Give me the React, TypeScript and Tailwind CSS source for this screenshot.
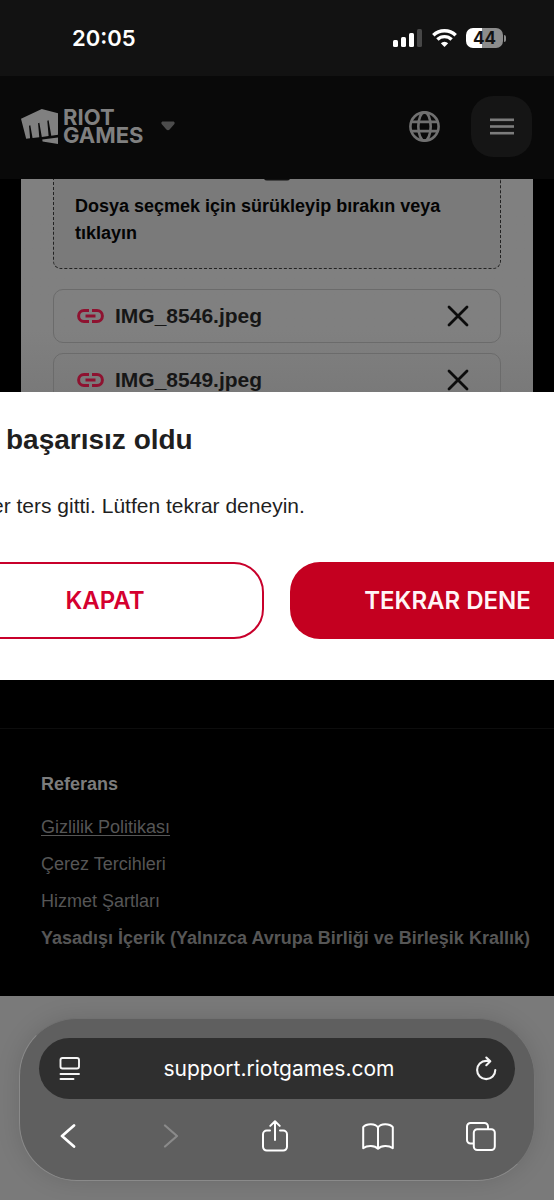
import type { ReactNode } from "react";

const files = ["IMG_8546.jpeg", "IMG_8549.jpeg"];

function StatusBar() {
  return (
    <div className="flex h-[76px] items-center justify-between bg-[#121212] pl-[72px] pr-12 font-['Inter',sans-serif]">
      <span className="text-[22px] font-semibold leading-7 text-white">20:05</span>
      <div className="flex items-center gap-[9px]">
        <svg width="30" height="18" viewBox="0 0 30 18" fill="#fff" aria-hidden="true">
          <rect x="0" y="11" width="5" height="7" rx="1.5" />
          <rect x="8" y="8" width="5" height="10" rx="1.5" />
          <rect x="16" y="4" width="5" height="14" rx="1.5" />
          <rect x="24" y="0" width="5" height="18" rx="1.5" fill="#474747" />
        </svg>
        <svg width="25" height="18" viewBox="0 0 25 18" fill="none" stroke="#fff" strokeWidth="3.4" aria-hidden="true">
          <path d="M1.3 6.3a16 16 0 0 1 22.4 0" />
          <path d="M5.4 10.5a10.2 10.2 0 0 1 14.2 0" />
          <path d="M12.5 18l-3.7-3.7a5.3 5.3 0 0 1 7.4 0z" fill="#fff" stroke="none" />
        </svg>
        <div className="flex items-center gap-px">
          <div className="flex h-5 w-[37px] items-center justify-center rounded-[7px] bg-[linear-gradient(90deg,#fff_44%,#8c8c8c_44%)] text-[17px] font-bold leading-5 text-[#121212]">
            44
          </div>
          <div className="h-[7px] w-[2px] rounded-r-full bg-[#8c8c8c]" />
        </div>
      </div>
    </div>
  );
}

function SiteHeader() {
  return (
    <header className="flex h-[103px] items-center justify-between bg-[#090909] pb-[3px] pl-[21px] pr-[22px]">
      <button type="button" className="flex items-center text-[#808080]" aria-label="Riot Games">
        <svg width="37" height="35" viewBox="0 0.86 24 22.28" preserveAspectRatio="none" fill="currentColor" aria-hidden="true">
          <path d="M13.458.86 0 7.093l3.353 12.761 2.552-.313-.701-8.024.838-.373 1.447 8.202 4.361-.535-.775-8.857.83-.37 1.591 9.025 4.412-.542-.849-9.708.84-.374 1.74 9.87L24 17.318V3.5zm.316 19.356.222 1.256L24 23.14v-4.18z" />
        </svg>
        <span className="ml-[5px] flex flex-col text-left font-['Inter',sans-serif] text-[22px] font-bold leading-[18px]">
          <span>RIOT</span>
          <span>GAMES</span>
        </span>
        <svg className="ml-[17px]" width="14" height="10" viewBox="0 0 14 10" fill="#4c4c4c" aria-hidden="true">
          <path d="M2 .5h10c1.6 0 2.2 1.6 1.2 2.7L8.6 8.500c-.9 1-2.300 1-3.200 0L.8 3.200C-.2 2.100.4.5 2 .5z" />
        </svg>
      </button>
      <div className="flex items-center gap-[31px]">
        <button type="button" aria-label="Dil">
          <svg width="31" height="31" viewBox="0 0 31 31" fill="none" stroke="#707070" strokeWidth="2.600" aria-hidden="true">
            <circle cx="15.5" cy="15.5" r="14.100" />
            <ellipse cx="15.5" cy="15.5" rx="6.200" ry="14.100" />
            <path d="M2.500 10.900h26M2.500 20.100h26" />
          </svg>
        </button>
        <button type="button" aria-label="Menü" className="flex size-[61px] items-center justify-center rounded-[22px] bg-[#151515]">
          <svg width="24" height="17" viewBox="0 0 24 17" fill="#7c7c7c" aria-hidden="true">
            <rect y="0.500" width="24" height="2.600" />
            <rect y="7.200" width="24" height="2.600" />
            <rect y="13.900" width="24" height="2.600" />
          </svg>
        </button>
      </div>
    </header>
  );
}

function FileRow({ name }: { name: string }) {
  return (
    <li className="flex h-[54px] items-center rounded-[10px] border border-[#6b6b6b] pl-[23px] pr-[31px]">
      <svg width="27" height="14" viewBox="0 0 27 14" fill="none" stroke="#8e1230" strokeWidth="3" aria-hidden="true">
        <path d="M12 1.600H7a5.400 5.400 0 0 0 0 10.800h5M15 1.600h5a5.400 5.400 0 0 1 0 10.800h-5M8.500 7h10" />
      </svg>
      <span className="ml-[11px] flex-1 text-[21px] font-bold leading-7 text-[#161616]">{name}</span>
      <button type="button" aria-label={`${name} kaldır`}>
        <svg width="22" height="22" viewBox="0 0 22 22" fill="none" stroke="#0c0c0c" strokeWidth="2.800" strokeLinecap="round" aria-hidden="true">
          <path d="M2 2l18 18M20 2 2 20" />
        </svg>
      </button>
    </li>
  );
}

function UploadCard() {
  return (
    <section className="mx-[21px] bg-gradient-to-b from-[#808080] from-60% to-[#757575] px-8 pb-6">
      <div className="flex flex-col rounded-b-[8px] border border-t-0 border-dashed border-[#222] bg-[#7a7a7a] px-[21px] pb-[21px]">
        <svg className="self-center" width="26" height="2" viewBox="0 0 26 2" aria-hidden="true">
          <path d="M0 0h26q-1 1.500-3 1.500H3Q1 1.500 0 0z" fill="#111" />
        </svg>
        <p className="mt-3 text-lg font-bold leading-[27px] text-[#040404]">
          Dosya seçmek için sürükleyip bırakın veya tıklayın
        </p>
      </div>
      <ul className="mt-5 flex flex-col gap-[10px]">
        {files.map((name) => (
          <FileRow key={name} name={name} />
        ))}
      </ul>
    </section>
  );
}

function ErrorDialog() {
  return (
    <div
      role="dialog"
      aria-labelledby="dialog-title"
      className="absolute bottom-12 -left-2 -right-[51px] bg-white pb-[41px] pt-8 text-[#1f1f1f]"
    >
      <h2 id="dialog-title" className="pl-[14px] text-[28px] font-bold leading-8">
        başarısız oldu
      </h2>
      <p className="mt-9 text-[21px] leading-7">er ters gitti. Lütfen tekrar deneyin.</p>
      <div className="mt-[42px] -ml-[46px] grid grid-cols-[318px_1fr] gap-[26px] font-['Inter',sans-serif] text-2xl font-semibold leading-7">
        <button type="button" className="h-[77px] rounded-[30px] border-2 border-[#c8002b] bg-white text-[#d5002f]">
          KAPAT
        </button>
        <button type="button" className="h-[77px] rounded-[30px] bg-[#c40020] text-[#fff5f6]">
          TEKRAR DENE
        </button>
      </div>
    </div>
  );
}

function Footer() {
  return (
    <footer className="border-t border-[#0d0d0d] bg-black pb-[45px] pl-[41px] pt-[42px] text-lg leading-[26px] text-[#565656]">
      <h3 className="font-bold text-[#7c7c7c]">Referans</h3>
      <ul className="mt-[17px] flex flex-col gap-[11px]">
        <li><a href="#gizlilik" className="underline underline-offset-2">Gizlilik Politikası</a></li>
        <li><a href="#cerez">Çerez Tercihleri</a></li>
        <li><a href="#sartlar">Hizmet Şartları</a></li>
        <li className="whitespace-nowrap font-bold"><a href="#icerik">Yasadışı İçerik (Yalnızca Avrupa Birliği ve Birleşik Krallık)</a></li>
      </ul>
    </footer>
  );
}

function ToolButton({ label, children }: { label: string; children: ReactNode }) {
  return (
    <button type="button" aria-label={label} className="flex h-9 w-8 items-center justify-center">
      {children}
    </button>
  );
}

function BrowserBar() {
  return (
    <div className="bg-[#7a7a7a] px-[19px] pb-[19px] pt-[22px]">
      <div className="rounded-[58px] border border-[#8a8a8a] border-r-[#757575] border-t-[#707070] bg-[#5f5f5f] px-[19px] pb-[26px] pt-[19px] shadow-[0_0_24px_rgba(0,0,0,0.12)]">
        <div className="flex h-[61px] items-center justify-between rounded-full bg-[#2f2f2f] px-[18px] text-white">
          <button type="button" aria-label="Sayfa menüsü">
            <svg width="26" height="26" viewBox="0 0 26 26" fill="none" stroke="#f4f4f4" strokeWidth="1.900" strokeLinecap="round" aria-hidden="true">
              <rect x="3.500" y="2" width="18.500" height="10.500" rx="2" />
              <path d="M3.500 18h18.500M3.500 23h13" />
            </svg>
          </button>
          <span className="font-['Inter',sans-serif] text-[21px] leading-7">support.riotgames.com</span>
          <button type="button" aria-label="Yenile">
            <svg width="22" height="26" viewBox="0 0 22 26" fill="none" stroke="#f4f4f4" strokeWidth="2.100" strokeLinecap="round" strokeLinejoin="round" aria-hidden="true">
              <path d="M20.300 14a9.100 9.100 0 1 1-9.100-9.100h3.500M11.300 1.500l4 3.800-4 3.900" />
            </svg>
          </button>
        </div>
        <div className="mt-[19px] flex items-center justify-between pl-[13px] pr-[18px]">
          <ToolButton label="Geri">
            <svg width="16" height="24" viewBox="0 0 16 24" fill="none" stroke="#fff" strokeWidth="2.700" strokeLinecap="round" strokeLinejoin="round" aria-hidden="true">
              <path d="M14 1.500 2 12l12 10.500" />
            </svg>
          </ToolButton>
          <ToolButton label="İleri">
            <svg width="16" height="24" viewBox="0 0 16 24" fill="none" stroke="#8a8a8a" strokeWidth="2.200" strokeLinecap="round" strokeLinejoin="round" aria-hidden="true">
              <path d="m2 1.500 12 10.500-12 10.500" />
            </svg>
          </ToolButton>
          <ToolButton label="Paylaş">
            <svg width="26" height="32" viewBox="0 0 26 32" fill="none" stroke="#fff" strokeWidth="2" strokeLinecap="round" strokeLinejoin="round" aria-hidden="true">
              <path d="M8 10.500H4.800A3.800 3.800 0 0 0 1 14.300v12.500A3.800 3.800 0 0 0 4.800 30.600h16.400a3.800 3.800 0 0 0 3.800-3.800V14.300a3.800 3.800 0 0 0-3.800-3.800H18M13 20V1.500M8.300 5.900l4.700-4.600 4.700 4.600" />
            </svg>
          </ToolButton>
          <ToolButton label="Yer işaretleri">
            <svg width="32" height="27" viewBox="0 0 32 27" fill="none" stroke="#fff" strokeWidth="2" strokeLinejoin="round" aria-hidden="true">
              <path d="M16 4.500C13.500.3 4.500.2 1.200 4.200v21c4-3 11.500-3 14.800.6 3.300-3.600 10.800-3.600 14.800-.6v-21C27.500.2 18.500.3 16 4.500zM16 4.500v21" />
            </svg>
          </ToolButton>
          <ToolButton label="Sekmeler">
            <svg width="30" height="29" viewBox="0 0 30 29" fill="none" stroke="#fff" strokeWidth="2" strokeLinejoin="round" aria-hidden="true">
              <rect x="7.800" y="7.200" width="21" height="20.800" rx="3.500" />
              <path d="M7.800 21.500H4.500A3.500 3.500 0 0 1 1 18V4.500A3.500 3.500 0 0 1 4.500 1h14A3.500 3.500 0 0 1 22 4.500v2.700" />
            </svg>
          </ToolButton>
        </div>
      </div>
    </div>
  );
}

export default function App() {
  return (
    <div className="min-h-screen overflow-hidden bg-black font-['Liberation_Sans',Arial,sans-serif]">
      <StatusBar />
      <SiteHeader />
      <main className="relative min-h-[549px] overflow-hidden">
        <UploadCard />
        <ErrorDialog />
      </main>
      <Footer />
      <BrowserBar />
    </div>
  );
}
